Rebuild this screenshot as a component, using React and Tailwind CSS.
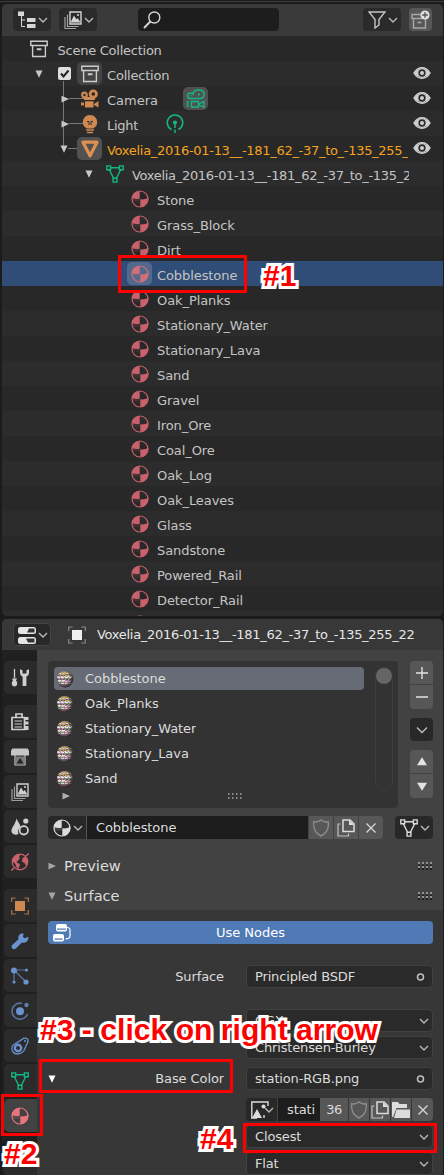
import React from "react";

/* ---------- icons ---------- */
function Svg({ w = 18, h = 18, className = "", children }) {
  return (
    <svg width={w} height={h} viewBox={`0 0 ${w} ${h}`} fill="none" stroke="currentColor" strokeWidth="1.4" className={"shrink-0 " + className}>
      {children}
    </svg>
  );
}
const Chevron = ({ className = "" }) => (
  <Svg w={10} h={8} className={"text-[#b8b8b8] " + className}><path d="M1 2l4 4 4-4" strokeWidth="1.4" /></Svg>
);
const Down = ({ className = "" }) => (
  <Svg w={8} h={8} className={className}><path d="M.5.5h7L4 7.8z" fill="currentColor" stroke="none" /></Svg>
);
const Right = ({ className = "" }) => (
  <Svg w={8} h={8} className={className}><path d="M.5.8v6.6L8 4z" fill="currentColor" stroke="none" /></Svg>
);
const Up = ({ className = "" }) => (
  <Svg w={10} h={9} className={className}><path d="M0 8.2h10L5 .3z" fill="currentColor" stroke="none" /></Svg>
);
const Archive = ({ className = "" }) => (
  <Svg className={className}>
    <path d="M.8 1.2h16.4v4.3H.8zM2.600 5.5v11h12.800v-11" />
    <path d="M6.800 9.200h4.600" strokeWidth="2" />
  </Svg>
);
const Material = ({ className = "" }) => (
  <Svg className={className}>
    <circle cx="9" cy="9" r="8" strokeWidth="1.200" />
    <path d="M8.700 1v7.700c-3 .8-5.500.3-8-.7A8.300 8.300 0 0 1 8.700 1zM9.300 17V9.300c3 .3 5.500-.2 8-1.300A8.300 8.300 0 0 1 9.300 17z" fill="currentColor" stroke="none" />
    <path d="M.7 8c0 1.500.4 2.200.8 3 2 .8 4.500 1 7.200.500V8.700z" fill="currentColor" stroke="none" opacity=".15" />
  </Svg>
);
const Mesh = ({ className = "" }) => (
  <Svg className={className}>
    <path d="M3.300 4.700l4.300 8.600M14.700 4.700L10.400 13.300M4.600 2.800h8.800" />
    <path d="M.8.900h3.800v3.800H.8zM13.400.900h3.800v3.800h-3.800zM7.100 13.300h3.800v3.800H7.100z" />
  </Svg>
);
const Eye = () => (
  <Svg className="text-[#cfcfcf]">
    <path d="M1 9c4-7 12-7 16 0-4 7-12 7-16 0z" strokeWidth="1.500" />
    <path d="M1 9l4-4v8zM17 9l-4-4v8z" fill="currentColor" stroke="none" />
    <circle cx="9" cy="9" r="4.300" strokeWidth="1.300" />
    <circle cx="9" cy="9" r="2" fill="currentColor" stroke="none" />
  </Svg>
);
const CameraSolid = () => (
  <Svg w={20} h={20} className="text-[#cf8850]">
    <circle cx="4.500" cy="6" r="2.300" strokeWidth="2.200" />
    <circle cx="13.300" cy="5" r="3.200" strokeWidth="2.800" />
    <path d="M4 8h11v3H4zM5 12.300h8.500v6.200H5zM1 13.500h3v3H1zM14 15l4.500-3v6.500L14 16z" fill="currentColor" stroke="none" />
  </Svg>
);
const CameraData = () => (
  <Svg w={20} h={20} className="text-[#12b886]">
    <path d="M4.500 9.600C.5 9.600.5 3.800 4.500 4c1.200 0 2 .4 2.600 1 .4-5.200 11-5.400 11 0 0 3-2 4.600-4.500 4.600z" strokeWidth="1.500" />
    <circle cx="13" cy="5.500" r="1.100" fill="currentColor" stroke="none" />
    <circle cx="5" cy="6.800" r=".8" fill="currentColor" stroke="none" />
    <path d="M3 13H1.500v4H3M5.500 12.500h7v5.500h-7zM13 15l5-2.700v6L13 16" strokeWidth="1.300" />
  </Svg>
);
const Bulb = () => (
  <Svg w={16} h={20} className="text-[#cf8850]">
    <path d="M8 1a7.200 7.200 0 0 1 5.300 12L11 14.500H5L2.700 13A7.200 7.200 0 0 1 8 1z" fill="currentColor" stroke="none" />
    <path d="M5 7.500h2v3.500m4-3.500H9v3.500" stroke="#2c2c2c" strokeWidth="1" />
    <path d="M4 16h8M5 18.600h6" strokeWidth="1.500" />
  </Svg>
);
const LightData = () => (
  <Svg w={18} h={20} className="text-[#12b886]">
    <path d="M5.500 15.500a7.700 7.700 0 1 1 7 0" strokeWidth="1.500" />
    <circle cx="9" cy="8.500" r="2.100" fill="currentColor" stroke="none" />
    <path d="M9 10v9" strokeDasharray="4 1.500" strokeWidth="1.500" />
  </Svg>
);
const MeshObject = () => (
  <Svg className="text-[#df9050]"><path d="M2 2.200h14L9 15.800z" strokeWidth="3.200" strokeLinejoin="round" /></Svg>
);
const Pictures = ({ className = "" }) => (
  <Svg className={className}>
    <path d="M6 1h11v12H6z" strokeWidth="1.400" />
    <path d="M3.500 3.500v12h11M1 6v11.500h11" strokeWidth="1.200" opacity=".7" />
    <path d="M6.500 11.500l3.500-7 2.500 4 1.200-1.600L16.500 11.500z" fill="currentColor" stroke="none" />
    <circle cx="14" cy="4" r="1.100" fill="currentColor" stroke="none" />
  </Svg>
);
const ObjectIcon = ({ className = "", inner = "currentColor" }) => (
  <Svg className={className}>
    <path d="M.7 5V1h4M13.300 1h4v4M17.300 13v4h-4M4.700 17h-4v-4" strokeWidth="1.200" opacity=".8" />
    <path d="M4 4h10v10H4z" fill={inner} stroke="none" />
  </Svg>
);
const Shield = ({ className = "" }) => (
  <Svg className={className}><path d="M9 1c2 1.700 5 2.200 7.300 1.700C17 9 15 14 9 17 3 14 1 9 1.700 2.700 4 3.200 7 2.700 9 1z" /></Svg>
);
const Copy = ({ className = "" }) => (
  <Svg className={className}>
    <path d="M6 1h7l4 4v7.500H6z" strokeWidth="1.500" />
    <path d="M12 1v5h5z" fill="currentColor" stroke="none" />
    <path d="M3.500 5H1v12h10.500v-2.500" strokeWidth="1.200" opacity=".8" />
  </Svg>
);
const Cross = () => <Svg w={12} h={12} className="text-[#d4d4d4]"><path d="M1.500 1.500l9 9M10.500 1.500l-9 9" /></Svg>;
const Grip = () => (
  <Svg w={15} h={8} className="text-[#b8b8b8]">
    <path d="M0 1.500h15M0 4h15M0 7h15" stroke="#151515" strokeWidth="1.500" strokeDasharray="2 2" />
    <path d="M0 1h15M0 5h15" strokeWidth="1.600" strokeDasharray="2 2" />
  </Svg>
);
const Ball = () => (
  <Svg>
    <defs>
      <radialGradient id="ballShade" cx=".42" cy=".42" r=".6">
        <stop offset=".55" stopColor="#000" stopOpacity="0" />
        <stop offset="1" stopColor="#0b0b0b" stopOpacity=".85" />
      </radialGradient>
      <clipPath id="ballClip"><circle cx="9" cy="9" r="8.200" /></clipPath>
    </defs>
    <g clipPath="url(#ballClip)" strokeWidth="1.100">
      <path d="M0 0h18v18H0z" fill="#a3958c" stroke="none" />
      <path d="M2 2.500h14M1 4.500h5M9 5.500h4" stroke="#cda92e" strokeDasharray="2 1" />
      <path d="M3 3.500h13M1 6.500h16M2 11.500h15" stroke="#d9d2cc" strokeDasharray="2 1.500" />
      <path d="M2 5.500h7M10 4.500h6M1 9.500h8" stroke="#6f4050" strokeDasharray="1.500 1.500" />
      <path d="M1 7.500h16M2 10.500h7M1 13.500h15" stroke="#ebe6e6" strokeDasharray="3 1" />
      <path d="M8 8.500h8M3 12.500h4" stroke="#418b50" strokeDasharray="1.500 2" />
      <path d="M1 8.500h6M9 10.500h7M4 14.500h9" stroke="#9a68b8" strokeDasharray="2 1" />
      <path d="M8 12.500h8M4 16h9" stroke="#c46a7c" strokeDasharray="2 1" />
      <path d="M10 9.500h7" stroke="#5d5046" strokeDasharray="2 1.500" />
    </g>
    <circle cx="9" cy="9" r="8.400" fill="url(#ballShade)" stroke="none" />
  </Svg>
);

/* ---------- outliner ---------- */
const materials = ["Stone", "Grass_Block", "Dirt", "Cobblestone", "Oak_Planks", "Stationary_Water", "Stationary_Lava", "Sand", "Gravel", "Iron_Ore", "Coal_Ore", "Oak_Log", "Oak_Leaves", "Glass", "Sandstone", "Powered_Rail", "Detector_Rail"];

function Row({ children, eye, odd, indent, selected }) {
  const bg = selected ? "bg-[#304d77]" : odd ? "bg-[#2c2c2c]" : "bg-[#282828]";
  return (
    <div className={`flex h-[25px] shrink-0 items-center pr-3 ${bg} ${indent}`}>
      <div className="flex min-w-0 flex-1 items-center">{children}</div>
      {eye && <div className="mb-px ml-[5px]"><Eye /></div>}
    </div>
  );
}
const Label = ({ children, className = "tracking-[-0.08px]" }) => (
  <span className={"overflow-hidden leading-[18px] whitespace-nowrap " + className}>{children}</span>
);
const IconTile = ({ children, className = "bg-[#444444]" }) => (
  <span className={"flex h-[23px] w-[25px] shrink-0 items-center justify-center rounded-[5px] " + className}>{children}</span>
);

function Outliner() {
  return (
    <section className="relative flex h-[612px] shrink-0 flex-col overflow-hidden rounded-[5px] bg-[#282828]">
      <header className="flex h-8 shrink-0 items-center bg-[#3a3a3a] pr-[11px] pb-px pl-[11px]">
        <button className="flex h-[23px] w-[38px] items-center justify-between rounded bg-[#2a2a2a] pr-[3px] pl-[5px] text-[#d6d6d6]">
          <Svg>
            <path d="M0 .5h6v4.500H0zM9 7h8.500v4H9zM9 13h8.500v4H9z" fill="currentColor" stroke="none" />
            <path d="M3.500 5v10.500H7M3.500 9H7" strokeWidth="1" />
          </Svg>
          <Chevron />
        </button>
        <button className="ml-2 flex h-[23px] w-[38px] items-center justify-between rounded bg-[#2a2a2a] pr-[3px] pl-[5px] text-[#d6d6d6]">
          <Pictures /><Chevron />
        </button>
        <div className="ml-[41px] flex h-[23px] w-[141px] items-center rounded bg-[#1d1d1d] pl-[5px] text-[#d6d6d6]">
          <Svg><circle cx="11.300" cy="6.500" r="5.500" /><path d="M7.300 10.500L1 17" strokeWidth="1.900" /></Svg>
        </div>
        <button className="ml-auto flex h-[23px] w-[38px] items-center justify-between rounded bg-[#2a2a2a] pr-[3px] pl-[5px] text-[#c6c6c6]">
          <Svg><path d="M1 1h16l-6 7.500V14l-4 3V8.500z" /></Svg><Chevron />
        </button>
        <button className="ml-2 flex h-[23px] w-[23px] items-center justify-center rounded bg-[#575757] text-[#a8a8a8]">
          <Svg w={19} h={19}>
            <path d="M10 4.500H1v4h10M2.500 8.500V18h12V9M6.500 12.500h4" />
            <circle cx="14" cy="5" r="4.600" fill="#dedede" stroke="none" />
            <path d="M14 2.200v5.600M11.200 5h5.600" stroke="#555" />
          </Svg>
        </button>
      </header>

      <Row indent="pl-[28px]"><Archive className="text-[#cdcdcd]" /><Label className="ml-[9.500px] pt-[4px] tracking-[-0.25px]">Scene Collection</Label></Row>
      <Row indent="pl-[33px]" odd eye>
        <Down className="text-[#c8c8c8]" />
        <Svg w={13} h={13} className="mb-px ml-[15px]"><rect width="13" height="13" rx="2" fill="#dedede" stroke="none" /><path d="M3 6.500l2.500 3L10.500 3.500" stroke="#222" strokeWidth="2" /></Svg>
        <IconTile className="ml-[6px] bg-[#444444]"><Archive className="text-[#cdcdcd]" /></IconTile>
        <Label className="ml-[5px] pt-[4px] tracking-[-0.2px]">Collection</Label>
      </Row>
      <Row indent="pl-[58px]" eye>
        <Right className="relative z-10 ml-px text-[#c8c8c8]" /><i className="mr-[-5px] h-px w-4 bg-[#777]" />
        <CameraSolid /><Label className="ml-[7px] pt-[4px]">Camera</Label>
        <IconTile className="ml-[25px] bg-[#515151]"><CameraData /></IconTile>
      </Row>
      <Row indent="pl-[58px]" odd eye>
        <Right className="relative z-10 ml-px text-[#c8c8c8]" /><i className="mr-[-3px] h-px w-4 bg-[#777]" />
        <Bulb /><Label className="ml-[9px] pt-[4px] tracking-[-0.3px]">Light</Label>
        <span className="ml-[28px]"><LightData /></span>
      </Row>
      <Row indent="pl-[58px]" eye>
        <Down className="relative z-10 text-[#c8c8c8]" /><i className="h-px w-[9px] bg-[#777]" />
        <IconTile className="bg-[#515151]"><MeshObject /></IconTile>
        <Label className="ml-[5px] flex-1 pt-[4px] tracking-[-0.3px] text-[#f5a31f]">Voxelia_2016-01-13__-181_62_-37_to_-135_255_</Label>
      </Row>
      <Row indent="pl-[83px]" odd>
        <Down className="text-[#c8c8c8]" /><Mesh className="ml-[13px] text-[#12b886]" />
        <Label className="mr-[22px] ml-[8px] flex-1 pt-[4px] tracking-[-0.31px]">Voxelia_2016-01-13__-181_62_-37_to_-135_2</Label>
      </Row>
      {materials.map((m) => (
        <Row key={m} indent="pl-[125px]" odd={materials.indexOf(m) % 2 === 1} selected={m === "Cobblestone"}>
          <IconTile className={m === "Cobblestone" ? "bg-[#52698b] text-[#d36f7c]" : "text-[#c8616c]"}><Material /></IconTile>
          <Label className="ml-[5px] pt-[4px] tracking-[-0.08px]">{m}</Label>
        </Row>
      ))}
      <Row indent="pl-[125px]" odd><IconTile className="text-[#c8616c]"><Material /></IconTile></Row>
      <i className="absolute top-[77px] left-[61px] h-[66px] w-px bg-[#777]" />
    </section>
  );
}

/* ---------- property tabs ---------- */
const tabs = [
  { c: "text-[#cfcfcf]", gap: "mb-[9px]", icon: <><path d="M3.500 0v9" strokeWidth="1.300" /><path d="M1 9.500h5l-1 2c2 2 1.500 6-1.500 6S0 13.500 2 11.500z" fill="currentColor" stroke="none" /><path d="M9 .3v3.200c0 2.500 1.200 3.500 2.600 4V17h3.800V7.500c1.400-.5 2.600-1.500 2.600-4V.3l-2.500 1v3.200h-4V1.300z" fill="currentColor" stroke="none" /></> },
  { c: "text-[#cfcfcf]", icon: <><path d="M5 4V1h6v3M1 4.500h12.500v12H1z" strokeWidth="1.700" /><path d="M3.500 8h7.500M3.500 11h7.500M3.500 14h7.500" strokeWidth="1" /><path d="M13.500 4h4v3h-4zM13.500 8.500h4v3h-4zM13.500 13h4v4h-4z" fill="currentColor" stroke="none" /></> },
  { c: "text-[#c6c6c6]", icon: <><path d="M1.500.5h15L18 2.500v5H0v-5z" fill="currentColor" stroke="none" /><path d="M4 7v10h10V7" strokeWidth="1.200" /><path d="M4.500 8.500h9v8h-9z" fill="#7c7c7c" stroke="none" /><path d="M5.500 15.500l3.700-5.500 3.300 5.500z" fill="#262626" stroke="none" /></> },
  { c: "text-[#cfcfcf]", icon: <Pictures /> },
  { c: "text-[#cfcfcf]", icon: <><path d="M5.500.5c2 5 4.500 6 3.500 9-2 1.500-2.500 4-1.500 6.500C3 18 0 15 .5 12 1 9 4 7 5.500.5z" fill="currentColor" stroke="none" /><circle cx="12.800" cy="12.300" r="4.200" strokeWidth="1.800" /><circle cx="14.800" cy="3" r="2.600" fill="currentColor" stroke="none" /></> },
  { c: "text-[#c8616c]", gap: "mb-[9px]", icon: <><circle cx="9" cy="9" r="7.800" strokeWidth="1.200" /><path d="M2 5c2-3 5-4 7.500-3.500L8 4l1 1.500L6.500 8l-1 1.500L9 11l-1.500 5L5 13.500 4.500 11 2 9zM11.500 5l3-1.500L17 8l-2 5-1.500-3-2.500-1.500z" fill="currentColor" stroke="none" /><path d="M.3 17.500l2.700-2.500M15 3L17.700.500" /></> },
  { c: "text-[#cf8850]", icon: <ObjectIcon /> },
  { c: "text-[#6a92cf]", icon: <path d="M15.500 5.500l-2 .8-1.600-1.600.8-3C9.500.5 6.500 3 7.500 7.200L1.200 13c-2 2.500 1 5.800 3.700 3.600l6-6c4 1 6.600-1.800 6.600-5.600z" fill="currentColor" stroke="none" /> },
  { c: "text-[#6a92cf]", icon: <><path d="M3 5v11M6 3h9M5 5l10 10" strokeWidth="1.200" opacity=".75" /><g fill="currentColor" stroke="none"><circle cx="3" cy="3.500" r="3" /><circle cx="15.500" cy="3" r="1.600" /><circle cx="3" cy="15" r="1.600" /><circle cx="15" cy="15" r="2.600" /></g></> },
  { c: "text-[#6a92cf]", icon: <><path d="M11 1.400A8 8 0 1 0 16.500 12" strokeWidth="1.600" opacity=".7" /><circle cx="9" cy="9.300" r="4" fill="currentColor" stroke="none" /><circle cx="15.500" cy="3" r="2.200" fill="currentColor" stroke="none" opacity=".8" /></> },
  { c: "text-[#6a92cf]", icon: <><path d="M13 1.200c3-.8 5 2 3.500 4.500L13 13.500C11 17 5 18.500 2 15 0 12 1 9 3 7.500z" strokeWidth="1.300" /><circle cx="7" cy="11" r="3.200" strokeWidth="2.400" /><circle cx="14" cy="4" r="1" fill="currentColor" stroke="none" /></> },
  { c: "text-[#12b886]", icon: <Mesh /> },
  { c: "text-[#ec7480]", icon: <Material />, active: true },
];

function Tabs() {
  return (
    <nav className="flex w-[35px] shrink-0 flex-col gap-[2px] bg-[#202020] pt-[11px] pl-[2px]">
      {tabs.map((t, i) => (
        <div key={i} className={`flex h-[33px] shrink-0 items-center justify-center rounded-l-[5px] pr-px ${t.active ? "bg-[#424242]" : "bg-[#2b2b2b]"} ${t.c} ${t.gap || ""}`}>
          <Svg>{t.icon}</Svg>
        </div>
      ))}
      <div className="mt-[9px] h-[33px] shrink-0 rounded-l-[5px] bg-[#2b2b2b]" />
    </nav>
  );
}

/* ---------- properties ---------- */
const Field = ({ children, icon, className = "" }) => (
  <div className={"flex h-[23px] w-[187px] items-center justify-between rounded border border-[#404040] bg-[#2a2a2a] pr-[3px] pl-[8px] " + className}>
    <Label className="tracking-[-0.15px]">{children}</Label>
    {icon === "dot" ? <Svg w={17} h={10} className="text-[#c0c0c0]"><circle cx="8.500" cy="5" r="3" strokeWidth="1.500" /></Svg> : <Chevron />}
  </div>
);
const SideButton = ({ children, className }) => (
  <button className={"flex w-[23px] items-center justify-center text-[#e3e3e3] " + className}>{children}</button>
);

function Properties() {
  return (
    <section className="flex h-[556px] shrink-0 flex-col overflow-hidden rounded-t-[5px] bg-[#424242]">
      <header className="flex h-[31px] shrink-0 items-center bg-[#383838] pl-[11px] text-[#e6e6e6]">
        <button className="flex h-[23px] w-[38px] items-center justify-between rounded border border-[#444] bg-[#282828] pr-[2px] pl-[4px]">
          <Svg>
            <rect x="0" y="1" width="18" height="7" rx="2.500" fill="currentColor" stroke="none" />
            <rect x="0" y="11" width="18" height="7" rx="2.500" fill="currentColor" stroke="none" />
            <path d="M11 2.500h5.500v4H9zM8 12.500h8.500v4H10z" fill="#333" stroke="none" />
          </Svg>
          <Chevron />
        </button>
        <ObjectIcon className="ml-[17px] text-[#9c9c9c]" inner="#f0f0f0" />
        <Label className="ml-[11px] tracking-[-0.3px]">Voxelia_2016-01-13__-181_62_-37_to_-135_255_22</Label>
      </header>
      <div className="flex min-h-0 flex-1">
        <Tabs />
        <main className="flex min-w-0 flex-1 flex-col text-[#dcdcdc]">
          <div className="flex h-[158px] shrink-0 pt-[11px] pl-[11px]">
            <div className="flex h-[147px] w-[350px] rounded bg-[#333] pt-[6px] pl-[6px]">
              <div className="w-[310px]">
                {["Cobblestone", "Oak_Planks", "Stationary_Water", "Stationary_Lava", "Sand"].map((m, i) => (
                  <div key={m} className={`mb-[2px] flex h-[23px] items-center rounded pl-[2px] ${i === 0 ? "bg-[#666b75]" : ""}`}>
                    <Ball /><Label className="ml-[11px] tracking-[-0.05px]">{m}</Label>
                  </div>
                ))}
                <div className="flex items-center pl-[8px]">
                  <Right className="text-[#b0b0b0]" />
                  <Svg w={14} h={6} className="ml-[158px] text-[#aaa]"><path d="M0 1h14M0 5h14" strokeDasharray="1.500 2.500" /></Svg>
                </div>
              </div>
              <div className="ml-[11px] h-[124px] w-[18px] rounded-full border border-[#3c3c3c]"><div className="size-4 rounded-full bg-[#656565]" /></div>
            </div>
            <div className="ml-3 flex flex-col">
              <SideButton className="h-[23px] rounded-t bg-[#575757]"><Svg w={12} h={12}><path d="M6 0v12M0 6h12" /></Svg></SideButton>
              <SideButton className="mt-px h-6 rounded-b bg-[#575757]"><Svg w={12} h={12}><path d="M0 6h12" /></Svg></SideButton>
              <SideButton className="mt-[9px] h-[23px] rounded bg-[#282828]"><Svg w={12} h={10} className="text-[#bdbdbd]"><path d="M1 2.500l5 5 5-5" /></Svg></SideButton>
              <SideButton className="mt-[9px] h-[23px] rounded-t bg-[#575757]"><Up /></SideButton>
              <SideButton className="mt-px h-6 rounded-b bg-[#575757]"><Up className="rotate-180" /></SideButton>
            </div>
          </div>

          <div className="mt-2 flex h-[23px] shrink-0 pl-[11px]">
            <div className="flex w-[39px] items-center justify-between rounded-l border-r border-[#555] bg-[#282828] pr-[3px] pl-[5px]"><Material /><Chevron /></div>
            <div className="flex w-[221px] items-center bg-[#1d1d1d] pl-[9px]"><Label>Cobblestone</Label></div>
            <div className="ml-px flex w-6 items-center justify-center bg-[#575757] text-[#8c8c8c]"><Shield /></div>
            <div className="ml-px flex w-6 items-center justify-center bg-[#575757]"><Copy /></div>
            <div className="ml-px flex w-6 items-center justify-center rounded-r bg-[#575757]"><Cross /></div>
            <div className="ml-3 flex w-[38px] items-center justify-between rounded bg-[#282828] pr-[3px] pl-[5px]"><Mesh /><Chevron /></div>
          </div>

          <div className="mt-[12px] flex h-[30px] shrink-0 items-center pr-[10px] pb-px pl-[11px] text-[14.600px]">
            <Right className="text-[#a5a5a5]" /><Label className="ml-[8px] pt-px">Preview</Label><span className="ml-auto"><Grip /></span>
          </div>
          <div className="flex h-[29px] shrink-0 items-center pr-[10px] pl-[11px] text-[14.600px]">
            <Down className="text-[#a5a5a5]" /><Label className="ml-[8px] pt-px">Surface</Label><span className="ml-auto"><Grip /></span>
          </div>

          <div className="flex min-h-0 flex-1 flex-col bg-[#373737] pt-[11px] pr-[10px] pl-[11px]">
            <button className="flex h-[23px] shrink-0 items-center rounded bg-[#507ab5] pl-[5px] text-white">
              <Svg>
                <rect x="3" y="0" width="11" height="7.500" rx="2" fill="currentColor" stroke="none" />
                <rect x="0" y="10" width="11" height="7.500" rx="2" fill="currentColor" stroke="none" />
                <path d="M4 5.200h9M1.500 15.200h8" stroke="#507ab5" strokeWidth="1.200" />
                <path d="M14 3.500c2.500 0 3 .5 3 2.500v6c0 2-1 2.800-4.500 2.800" strokeWidth="1.200" />
              </Svg>
              <Label className="flex-1 pr-[3px] text-center">Use Nodes</Label>
            </button>
            <div className="mt-[21px] flex shrink-0 items-center justify-between"><Label className="w-[176px] text-right tracking-[-0.1px]">Surface</Label><Field icon="dot">Principled BSDF</Field></div>
            <Field className="mt-[21px] shrink-0 self-end">GGX</Field>
            <Field className="mt-[4px] shrink-0 self-end">Christensen-Burley</Field>
            <div className="mt-[8px] flex shrink-0 items-center">
              <Down className="text-white" />
              <Label className="mr-auto w-[168px] text-right tracking-[-0.1px]">Base Color</Label>
              <Field icon="dot">station-RGB.png</Field>
            </div>
            <div className="mt-[8px] flex h-[23px] w-[187px] shrink-0 self-end">
              <div className="flex w-8 items-center rounded-l border-r border-[#444] bg-[#282828] pl-[5px]">
                <Svg><path d="M17 5V1H.8v16H6" /><path d="M1 17L6 8l5 9z" fill="currentColor" stroke="none" /><circle cx="12.500" cy="5.500" r="2" fill="currentColor" stroke="none" /><path d="M13 14v3" /></Svg>
                <Chevron className="-ml-[5px]" />
              </div>
              <div className="flex w-[42px] items-center overflow-hidden bg-[#1d1d1d] pl-[9px]"><Label>stati</Label></div>
              <div className="flex w-[28px] items-center justify-center bg-[#575757]"><Label className="tracking-[-0.4px]">36</Label></div>
              <div className="ml-px flex w-5 items-center justify-center bg-[#575757] text-[#8c8c8c]"><Shield /></div>
              <div className="ml-px flex w-5 items-center justify-center bg-[#575757]"><Copy /></div>
              <div className="ml-px flex w-5 items-center justify-center bg-[#575757]"><Svg><path d="M0 1h6l1.500 2H15v4H4.500L1 16H0zM4.500 8.500H18V17H2z" fill="currentColor" stroke="none" /></Svg></div>
              <div className="ml-px flex flex-1 items-center justify-center rounded-r bg-[#575757]"><Cross /></div>
            </div>
            <Field className="mt-[4px] shrink-0 self-end">Closest</Field>
            <Field className="mt-[4px] shrink-0 self-end">Flat</Field>
          </div>
        </main>
      </div>
    </section>
  );
}

/* ---------- tutorial callouts ---------- */
const Frame = ({ className }) => <div className={"absolute z-20 border-[3px] border-[#fe0000] " + className} />;
const Note = ({ className, children }) => (
  <div className={"absolute z-20 text-[30px] leading-[32px] font-bold whitespace-nowrap text-[#fe0000] [-webkit-text-stroke:6px_white] [paint-order:stroke_fill] [stroke-linejoin:round] font-['Liberation_Sans',Arial,sans-serif] " + className}>{children}</div>
);

export default function App() {
  return (
    <div className="relative h-[1175px] w-[444px] overflow-hidden bg-[#1b1b1b] font-['DejaVu_Sans',sans-serif] text-[13px] text-[#c4c4c4]">
      <div className="h-[4px] border-b border-[#1b1b1b] bg-[#1b1b1b] pt-px"><div className="h-px bg-[#3f3f3f]" /></div>
      <div className="flex flex-col gap-[3px] pr-px pl-[2px]">
        <Outliner />
        <Properties />
      </div>
      <Frame className="top-[255px] left-[118px] h-[38px] w-[129px]" />
      <Frame className="top-[1094px] left-[1px] h-[42px] w-[42px]" />
      <Frame className="top-[1059px] left-[39px] h-[34px] w-[194px]" />
      <Frame className="top-[1123px] left-[243px] h-[30px] w-[194px]" />
      <Note className="top-[260px] left-[263px]">#1</Note>
      <Note className="top-[1138px] left-[4px]">#2</Note>
      <Note className="top-[1014px] left-[40px] tracking-[0.05px]">#3 - click on right arrow</Note>
      <Note className="top-[1123px] left-[200px]">#4</Note>
    </div>
  );
}
